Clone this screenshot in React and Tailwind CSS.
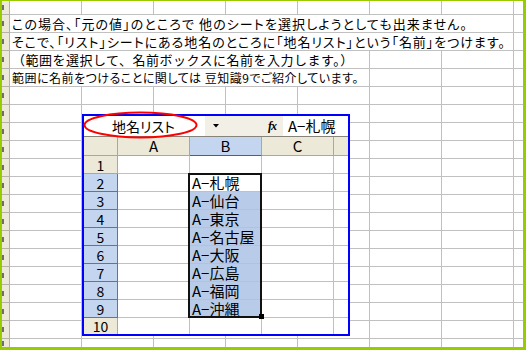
import React from 'react'

const JP = "font-['Noto_Sans_CJK_JP',sans-serif]"

// background sheet rows (first is the cut-off top row)
const bgRows = [
  { h: 'h-[14px]' },
  { h: 'h-[18px]', w: 'w-[504px]', span: 7, cls: "text-[13px] leading-[17px] tracking-[1.1px] [font-feature-settings:'palt']", text: 'この場合、「元の値」のところで 他のシートを選択しようとしても出来ません。' },
  { h: 'h-[18px]', w: 'w-[504px]', span: 7, cls: "text-[13px] leading-[17px] tracking-[0.95px] [font-feature-settings:'palt']", text: 'そこで、「リスト」シートにある地名のところに「地名リスト」という「名前」をつけます。' },
  { h: 'h-[18px]', w: 'w-[360px]', span: 5, cls: 'text-[13px] leading-[17px] tracking-[0.5px]', text: '（範囲を選択して、名前ボックスに名前を入力します。）' },
  { h: 'h-[18px]', w: 'w-[360px]', span: 5, cls: "text-[12px] leading-[17px] tracking-[0.5px] [font-feature-settings:'palt']", text: '範囲に名前をつけることに関しては 豆知識9でご紹介しています。' },
  ...Array.from({ length: 14 }, () => ({ h: 'h-[18px]' })),
  { h: 'flex-1' },
]

const places = ['A−札幌', 'A−仙台', 'A−東京', 'A−名古屋', 'A−大阪', 'A−広島', 'A−福岡', 'A−沖縄']

function BgRow({ row, last }) {
  const line = last ? '' : 'border-b'
  const blanks = 7 - (row.span || 0)
  return (
    <div className={`flex shrink-0 ${row.h}`}>
      <div className={`w-[8px] shrink-0 bg-[#ece9d8] border-r border-[#b4b2a8] ${line} flex items-center`}>
        <div className="w-[2px] h-[5px] bg-[#6e6e6e]" />
      </div>
      {row.text && (
        <div className={`${row.w} shrink-0 border-r ${line} border-[#c0c0c0] pl-[2px] whitespace-nowrap text-black ${row.cls}`}>
          {row.text}
        </div>
      )}
      {Array.from({ length: blanks }).map((_, i) => (
        <div key={i} className={`w-[72px] shrink-0 border-r ${line} border-[#c0c0c0]`} />
      ))}
      <div className={`flex-1 ${line} border-[#c0c0c0]`} />
    </div>
  )
}

function SheetRow({ n, text, tall }) {
  const sel = n >= 2 && n <= 9
  const h = tall ? 'h-[18px] shrink-0' : 'flex-1'
  const line = tall ? 'border-b' : ''
  return (
    <div className={`flex ${h}`}>
      <div className={`w-[34px] shrink-0 border-r ${line} flex items-center justify-center text-[14px] leading-none ${sel ? 'bg-[#c4d5f0] border-[#4a78c9]' : 'bg-[#ece9d8] border-[#aca899]'}`}>
        {n}
      </div>
      <div className={`w-[72px] shrink-0 border-r ${line} border-[#c0c0c0]`} />
      <div className={`w-[72px] shrink-0 border-r ${line} border-[#c0c0c0] pl-[2px] text-[15px] leading-[17px] whitespace-nowrap ${n >= 3 && n <= 9 ? 'bg-[#b8cce9]' : ''}`}>
        {text}
      </div>
      <div className={`w-[72px] shrink-0 border-r ${line} border-[#c0c0c0]`} />
      <div className={`flex-1 ${line} border-[#c0c0c0]`} />
    </div>
  )
}

export default function App() {
  return (
    <div className={`relative w-[526px] h-[350px] overflow-hidden bg-white text-black ${JP}`}>
      <div className="flex flex-col h-full border-[#99cc00] border-t border-l-2 border-r-[3px] border-b-[3px]">
        {bgRows.map((r, i) => (
          <BgRow key={i} row={r} last={i === bgRows.length - 1} />
        ))}
      </div>

      {/* pasted Excel capture */}
      <div className="absolute left-[82px] top-[114px] w-[268px] h-[222px] border-2 border-[#0000ff] bg-white flex flex-col overflow-hidden">
        <div className="h-[20px] shrink-0 flex bg-[#f1efe6]">
          <div className="w-[121px] shrink-0 bg-white pl-[28px] text-[14px] leading-[20px] [font-feature-settings:'palt']">地名リスト</div>
          <div className="w-[78px] shrink-0 flex items-center">
            <svg width="6" height="4" viewBox="0 0 6 4" className="ml-[8px]">
              <polygon points="0,0 6,0 3,3.5" fill="#000" />
            </svg>
            <span className="ml-[49px] font-['Liberation_Serif',serif] italic font-bold text-[12px] leading-none tracking-[-1px]">fx</span>
          </div>
          <div className="flex-1 bg-white pl-[5px] text-[15px] leading-[20px] whitespace-nowrap">A−札幌</div>
        </div>

        <div className="h-[20px] shrink-0 flex border-t border-[#86847a] text-[15px] leading-[18px]">
          <div className="w-[34px] shrink-0 bg-[#ece9d8] border-r border-b border-[#aca899]" />
          <div className="w-[72px] shrink-0 bg-[#ece9d8] border-r border-b border-[#aca899] text-center">A</div>
          <div className="w-[72px] shrink-0 bg-[#c4d5f0] border-r border-[#aca899] border-b border-b-[#3161c2] text-center">B</div>
          <div className="w-[72px] shrink-0 bg-[#ece9d8] border-r border-b border-[#aca899] text-center">C</div>
          <div className="flex-1 bg-[#ece9d8] border-b border-[#aca899]" />
        </div>

        <SheetRow n={1} tall />
        {places.map((p, i) => (
          <SheetRow key={p} n={i + 2} text={p} tall />
        ))}
        <SheetRow n={10} />

        <div className="absolute left-[104px] top-[57px] w-[74px] h-[145px] border-2 border-[#111]" />
        <div className="absolute left-[175px] top-[198px] w-[5px] h-[5px] bg-black" />
      </div>

      <svg className="absolute left-[82px] top-[110px]" width="118" height="31" viewBox="0 0 118 31">
        <ellipse cx="58.5" cy="15" rx="56" ry="12.5" fill="none" stroke="#ff0000" strokeWidth="2" />
      </svg>
    </div>
  )
}
